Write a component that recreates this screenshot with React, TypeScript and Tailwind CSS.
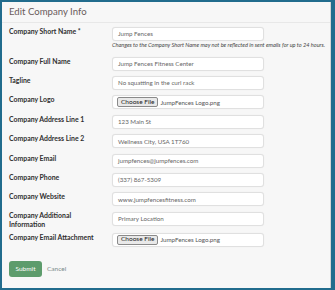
import React from 'react';

type Field = {
  label: string;
  value: string;
  kind?: 'text' | 'file' | 'placeholder';
  tall?: boolean;
};

const fields: Field[] = [
  { label: 'Company Full Name', value: 'Jump Fences Fitness Center' },
  { label: 'Tagline', value: 'No squatting in the curl rack' },
  { label: 'Company Logo', value: 'JumpFences Logo.png', kind: 'file' },
  { label: 'Company Address Line 1', value: '123 Main St' },
  { label: 'Company Address Line 2', value: 'Wellness City, USA 1T760' },
  { label: 'Company Email', value: 'jumpfences@jumpfences.com' },
  { label: 'Company Phone', value: '(337) 867-5309' },
  { label: 'Company Website', value: 'www.jumpfencesfitness.com' },
  { label: 'Company Additional Information', value: 'Primary Location', kind: 'placeholder', tall: true },
  { label: 'Company Email Attachment', value: 'JumpFences Logo.png', kind: 'file' },
];

const labelClass = "w-[103px] shrink-0 pr-2 text-[6.9px] leading-[9.4px] font-bold text-[#2f2f2f]";
const boxClass = "w-[152px] h-[14px] flex items-center bg-white border border-[#e0e0e0] rounded-[3px] shadow-[0_0_1px_rgba(0,0,0,0.08)] text-[6.2px] text-[#666]";

const InputBox: React.FC<{ field: Field }> = ({ field }) => {
  if (field.kind === 'file') {
    return (
      <div className={boxClass + " pl-[4px]"}>
        <span className="h-[10px] px-[3px] flex items-center border border-[#8a8a8a] rounded-[2px] bg-[#e9e9e9] text-[6.5px] text-[#222] leading-none">Choose File</span>
        <span className="ml-[2px] text-[#555]">{field.value}</span>
      </div>
    );
  }
  return (
    <div className={boxClass + " pl-[5px]" + (field.kind === 'placeholder' ? " text-[#9a9a9a]" : "")}>
      {field.value}
    </div>
  );
};

export default function App() {
  return (
    <div className="w-[335px] h-[290px] bg-[#f7f7f7] border-t-2 border-l-2 border-b-2 border-r-4 border-[#216c8d]" style={{ fontFamily: 'Lato, "Liberation Sans", sans-serif' }}>
      <div className="h-full border-r border-[#d4d4d4] flex flex-col">
        <div className="h-[21px] flex items-center pl-[7px] border-b border-[#e8e8e8] text-[9.6px] text-[#6a5b5b]">
          Edit Company Info
        </div>

        <div className="pl-[7px] pt-[4px] flex flex-col gap-[5.4px]">
          <div>
            <div className="flex">
              <div className={labelClass}>Company Short Name *</div>
              <div className={boxClass + " pl-[5px] text-[#555]"}>Jump Fences</div>
            </div>
            <div className="pl-[103px] h-[10.3px] pt-[0.5px] text-[5.6px] leading-[6px] italic text-[#444] whitespace-nowrap">
              Changes to the Company Short Name may not be reflected in sent emails for up to 24 hours.
            </div>
          </div>

          {fields.map(f => (
            <div key={f.label} className={"flex " + (f.tall ? "h-[15.3px]" : "h-[14px]")}>
              <div className={labelClass + (f.tall ? " -mt-[1px]" : "")}>{f.label}</div>
              <InputBox field={f} />
            </div>
          ))}
        </div>

        <div className="pl-[7px] mt-[14.5px] flex items-center gap-[5px]">
          <button className="w-[33px] h-[16px] rounded-[3px] bg-[#5d9c6c] text-white text-[6.5px]">Submit</button>
          <span className="text-[6.5px] text-[#7b8a8a]">Cancel</span>
        </div>
      </div>
    </div>
  );
}
